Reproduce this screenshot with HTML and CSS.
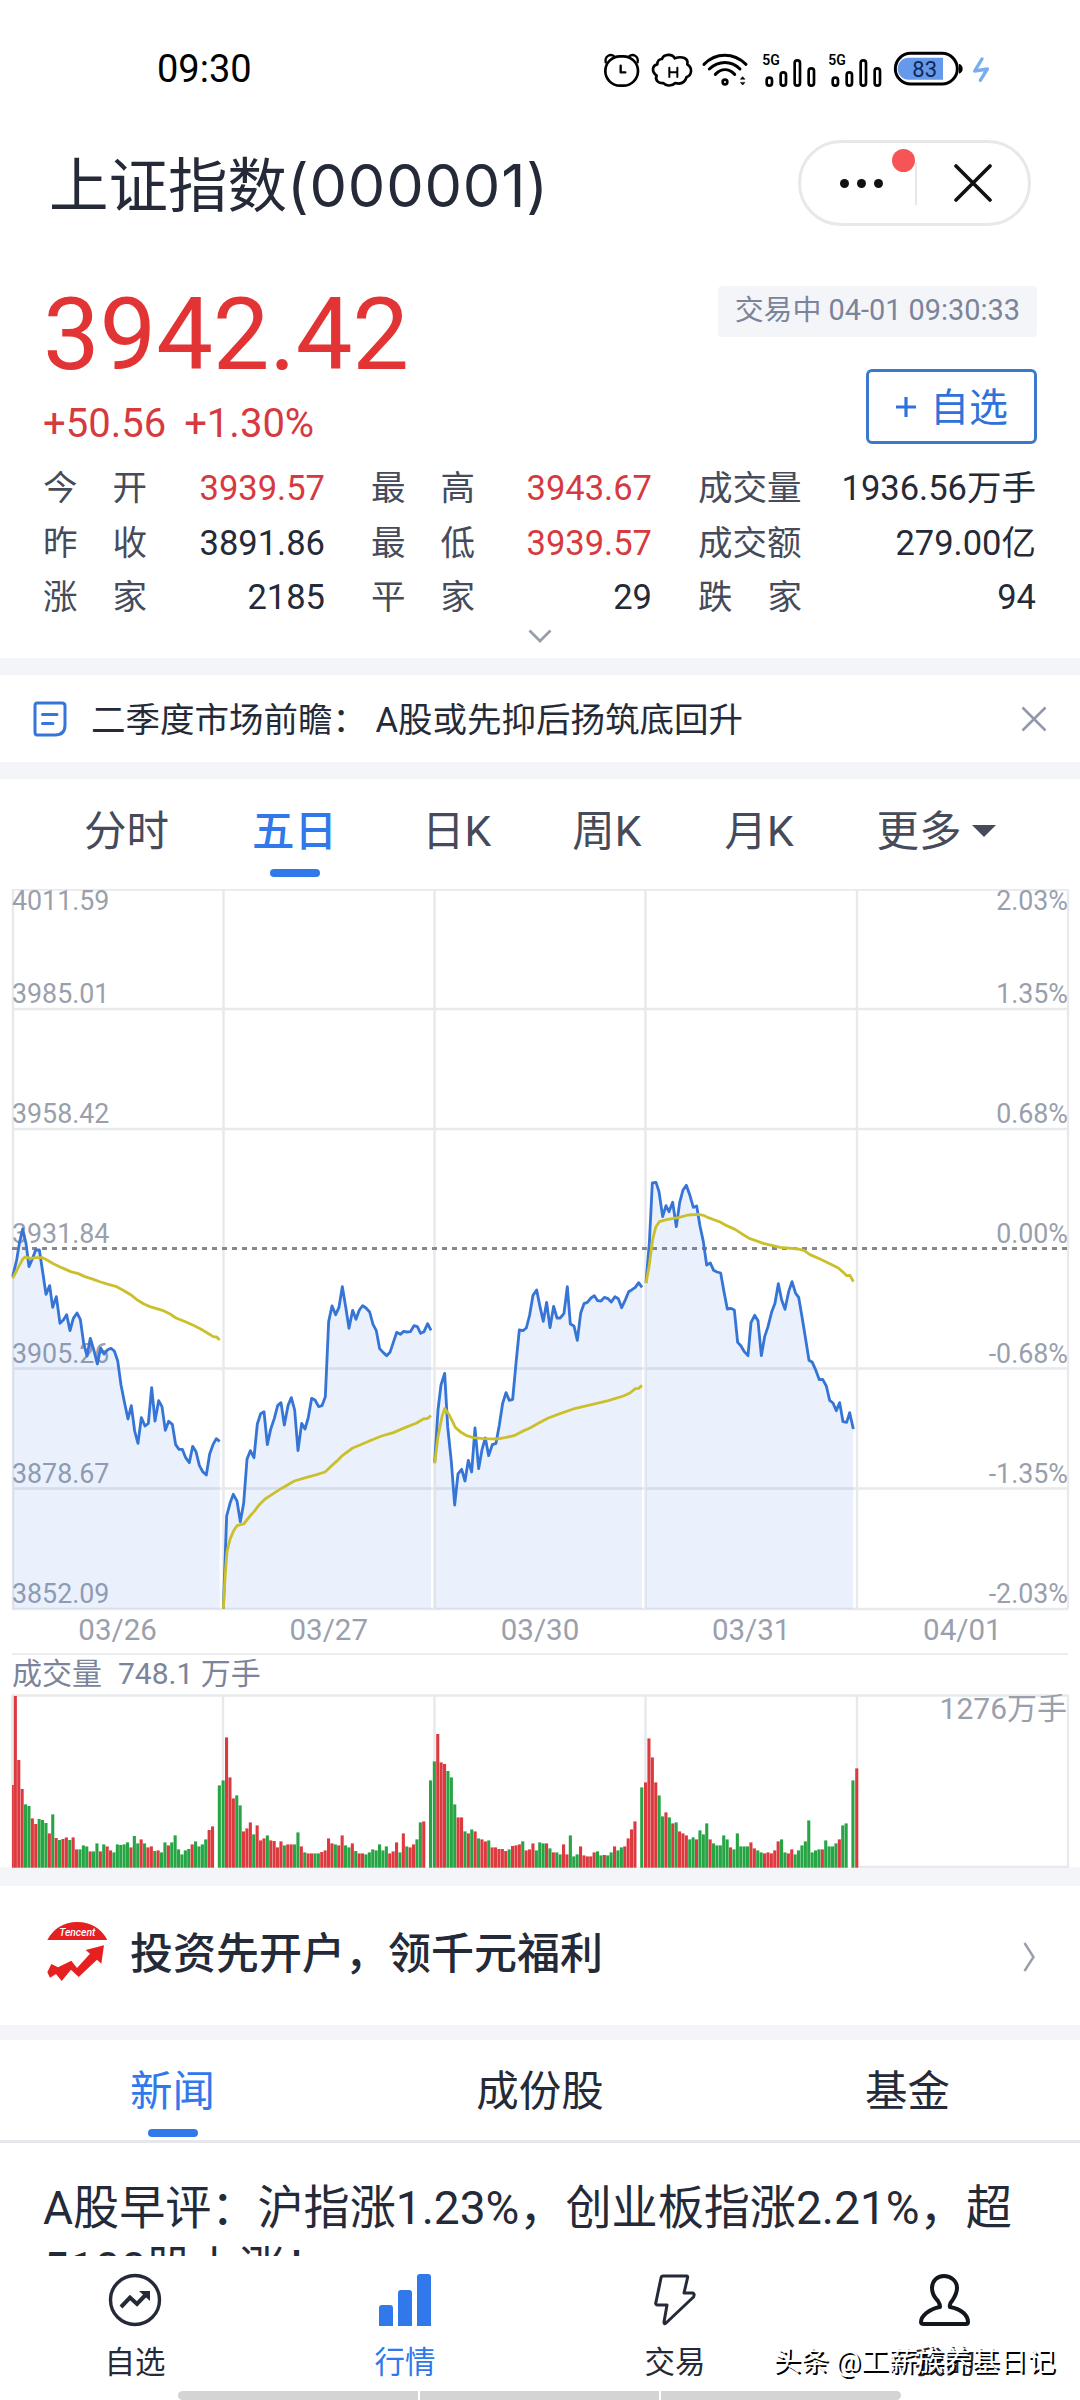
FILE: index.html
```html
<!DOCTYPE html>
<html lang="zh-CN">
<head>
    <meta charset="UTF-8">
    <title>上证指数(000001)</title>
    <link rel="stylesheet" href="styles.css">
</head>
<body>
<div id="app">
    <div class="status">
        <span class="time">09:30</span>
        <svg class="status-icons" width="396" height="40" viewBox="0 0 1188 120">
            <g fill="none" stroke="#000" stroke-width="8" stroke-linecap="round" stroke-linejoin="round">
                <rect x="16" y="22" width="98" height="88" rx="44"/>
                <path d="M17 40C14 22 30 12 44 23M113 40C116 22 100 12 86 23M62 50V70H76" stroke-width="7"/>
                <path d="M186 30C192 14 218 14 224 28C246 20 266 28 262 46C280 58 274 80 260 84C254 102 240 106 226 102C214 114 196 110 190 102C174 104 164 92 170 80C154 68 156 50 172 46C172 36 178 30 186 30Z"/>
                <path d="M208 56V84M232 56V84M208 70H232" stroke-width="6"/>
                <path d="M312 46C348 10 400 10 438 46M328 60C356 34 394 34 420 60M346 76C364 58 386 58 404 76" stroke-width="9"/>
                <circle cx="375" cy="99" r="7"/>
                <path d="M422 90L428 83L434 90ZM422 101L428 108L434 101Z" fill="#000" stroke-width="2"/>
                <g id="signal">
                    <rect x="500" y="86" width="16" height="24" rx="8"/>
                    <rect x="542" y="70" width="16" height="40" rx="8"/>
                    <rect x="584" y="34" width="16" height="76" rx="8"/>
                    <rect x="626" y="58" width="16" height="52" rx="8"/>
                </g>
                <use href="#signal" x="198"/>
            </g>
            <text x="487" y="47" class="net">5G</text>
            <text x="685" y="47" class="net">5G</text>
            <path d="M926 26H1029V92H926A33 33 0 0 1 926 26Z" fill="#6699ea"/>
            <rect x="886" y="13" width="186" height="92" rx="46" fill="none" stroke="#000" stroke-width="9"/>
            <path d="M1077 44Q1088 48 1088 59Q1088 70 1077 74Z"/>
            <text x="974" y="84" class="bat">83</text>
            <path d="M1146 30L1124 66L1162 60L1141 94" fill="none" stroke="#78adf2" stroke-width="10" stroke-linecap="round" stroke-linejoin="round"/>
        </svg>
    </div>

    <div class="header">
        <h1>上证指数<span>(000001)</span></h1>
        <div class="capsule">
            <div class="more"><i></i><i></i><i></i><b></b></div>
            <div class="close">
                <svg width="38" height="38" viewBox="0 0 38 38"><path d="M2 2L36 36M36 2L2 36" stroke="#111" stroke-width="3.6" stroke-linecap="round"/></svg>
            </div>
        </div>
    </div>

    <div class="quote">
        <div class="quote-top">
            <div class="left">
                <p class="now">3942.42</p>
                <p class="change"><span>+50.56</span><span>+1.30%</span></p>
            </div>
            <div class="right">
                <p class="state">交易中 04-01 09:30:33</p>
                <button class="add"><svg width="20" height="22" viewBox="0 0 20 22"><path d="M10 1V21M0 11H20" stroke="#2f72d9" stroke-width="3.2"/></svg><span>自选</span></button>
            </div>
        </div>
        <ul class="stats">
            <li><p><i>今</i><i>开</i></p><span class="red">3939.57</span></li>
            <li><p><i>最</i><i>高</i></p><span class="red">3943.67</span></li>
            <li><p>成交量</p><span>1936.56万手</span></li>
            <li><p><i>昨</i><i>收</i></p><span>3891.86</span></li>
            <li><p><i>最</i><i>低</i></p><span class="red">3939.57</span></li>
            <li><p>成交额</p><span>279.00亿</span></li>
            <li><p><i>涨</i><i>家</i></p><span>2185</span></li>
            <li><p><i>平</i><i>家</i></p><span>29</span></li>
            <li><p><i>跌</i><i>家</i></p><span>94</span></li>
        </ul>
        <svg class="fold" width="24" height="14" viewBox="0 0 24 14"><path d="M1.5 1.5L12 12L22.5 1.5" fill="none" stroke="#989eac" stroke-width="2.8"/></svg>
    </div>

    <div class="notice">
        <svg width="34" height="36" viewBox="0 0 34 36"><path d="M4 2H29Q32 2 32 5V24Q32 34 22 34H4Q2 34 2 31V5Q2 2 4 2ZM9.500 13.500H24M9.500 22.500H20" fill="none" stroke="#3576d8" stroke-width="3" stroke-linecap="round"/></svg>
        <p>二季度市场前瞻： A股或先抑后扬筑底回升</p>
        <svg width="26" height="26" viewBox="0 0 26 26"><path d="M1.500 1.500L24.500 24.500M24.500 1.500L1.500 24.500" stroke="#9298ab" stroke-width="2.5"/></svg>
    </div>

    <div class="chart">
        <ul class="periods">
            <li>分时</li>
            <li class="on">五日</li>
            <li>日K</li>
            <li>周K</li>
            <li>月K</li>
            <li>更多<i></i></li>
        </ul>
        <svg id="price" width="1080" height="724" viewBox="0 889 1080 724">
            <g class="grid">
                <path d="M12 889.500H1068M12 1009H1068M12 1129H1068M12 1368.500H1068M12 1488.500H1068M12 1609H1068"/>
                <path d="M13 889V1609M223.500 889V1609M434.500 889V1609M645.500 889V1609M857 889V1609M1068 889V1609" />
            </g>
            <path class="zero" d="M12 1248.500H1068"/>
            <g class="axis">
                <text x="12" y="909.500">4011.59</text>
                <text x="12" y="1002.500">3985.01</text>
                <text x="12" y="1122.500">3958.42</text>
                <text x="12" y="1242.500">3931.84</text>
                <text x="12" y="1362.500">3905.26</text>
                <text x="12" y="1482.500">3878.67</text>
                <text x="12" y="1602.500">3852.09</text>
            </g>
            <g class="axis end">
                <text x="1068" y="909.500">2.03%</text>
                <text x="1068" y="1002.500">1.35%</text>
                <text x="1068" y="1122.500">0.68%</text>
                <text x="1068" y="1242.500">0.00%</text>
                <text x="1068" y="1362.500">-0.68%</text>
                <text x="1068" y="1482.500">-1.35%</text>
                <text x="1068" y="1602.500">-2.03%</text>
            </g>
            <g id="lines" transform="translate(0 1100) scale(.33333)"></g>
        </svg>
        <ul class="dates">
            <li>03/26</li>
            <li>03/27</li>
            <li>03/30</li>
            <li>03/31</li>
            <li>04/01</li>
        </ul>
        <p class="vol-title">成交量<span>748.1 万手</span></p>
        <svg id="volume" width="1080" height="174" viewBox="0 1694 1080 174">
            <g class="grid">
                <path d="M12 1695.500H1068M857 1867H1068"/>
                <path d="M12.500 1695V1867M223 1695V1867M434.500 1695V1867M645.500 1695V1867M857 1695V1867M1068 1695V1867"/>
            </g>
            <text class="max" x="1067" y="1719">1276万手</text>
            <g id="bars"></g>
        </svg>
    </div>

    <div class="promo">
        <svg width="62" height="62" viewBox="0 0 186 186">
            <path d="M4 57Q32 4 94 3Q156 4 184 57Z" fill="#e62020"/>
            <text x="94" y="44" class="brand">Tencent</text>
            <path d="M4 154L16 129L36 139L76 119L93 141L132 98L119 87L174 73L166 128L153 116L98 168L75 146L47 180L30 159L12 170Z" fill="#e62020"/>
        </svg>
        <p>投资先开户，领千元福利</p>
        <svg class="arrow" width="12" height="32" viewBox="0 0 12 32"><path d="M1.500 2L10.500 16L1.500 30" fill="none" stroke="#999ead" stroke-width="2.4"/></svg>
    </div>

    <div class="news">
        <ul class="news-tab">
            <li class="on">新闻</li>
            <li>成份股</li>
            <li>基金</li>
        </ul>
        <p class="headline">A股早评：沪指涨1.23%，创业板指涨2.21%，超<br>5100股上涨！</p>
    </div>

    <ul class="nav">
        <li>
            <svg width="54" height="54" viewBox="0 0 54 54"><circle cx="27" cy="27" r="24.500" fill="none" stroke="#252a38" stroke-width="3.400"/><path d="M13 34L22 24.500L29 31L38 21.500" fill="none" stroke="#252a38" stroke-width="4"/><path d="M31 18H42V28Z" fill="#252a38"/></svg>
            <p>自选</p>
        </li>
        <li class="on">
            <svg width="54" height="54" viewBox="0 0 54 54"><path d="M1 53V35Q1 32 4 32H12Q15 32 15 35V53ZM20 53V20Q20 17 23 17H31Q34 17 34 20V53ZM39 53V4Q39 1 42 1H50Q53 1 53 4V53Z" fill="#3178ea"/></svg>
            <p>行情</p>
        </li>
        <li>
            <svg width="54" height="54" viewBox="0 0 54 54"><path d="M15 3H39Q40 3 39.500 5L36 20H45Q47 21 45.500 24L18 50Q16 52 16 49L19 32H9Q7 31 8 29L13 5Q13.500 3 15 3Z" fill="none" stroke="#252a38" stroke-width="3" stroke-linejoin="round"/></svg>
            <p>交易</p>
        </li>
        <li>
            <svg width="54" height="54" viewBox="0 0 54 54"><path d="M22 34Q22 31 20 28C14 22 14 17 14 15C14 8 19 3 26 3C33 3 39 8 39 15C39 18 38 22 34 28Q31 31 32 34C43 36 50 42 50 49Q50 51 48 51H6Q3 51 3 49C3 43 11 36 22 34Z" fill="none" stroke="#12171d" stroke-width="4" stroke-linejoin="round"/></svg>
            <p>我的</p>
        </li>
    </ul>
    <div class="home-bar"><i></i><i></i><i></i></div>
    <p class="mark">头条 @工薪族养基日记</p>
</div>

<script>
// 每天的分时线，三倍坐标
var price = [
    "38,530 50,480 58,430 68,387 78,430 87,500 97,477 107,450 118,450 128,515 138,583 149,557 158,622 169,590 180,670 190,660 200,644 210,692 220,655 231,639 241,658 251,730 261,768 271,715 281,748 292,792 302,744 312,762 322,750 333,745 343,753 353,782 363,855 373,905 384,957 394,917 404,993 414,1030 424,953 435,978 445,970 455,863 465,963 476,902 486,920 496,991 506,964 517,973 527,1034 537,1048 547,1048 557,1073 568,1088 578,1039 588,1055 598,1096 608,1115 619,1125 629,1062 639,1034 649,1016 659,1024",
    "670,1526 680,1248 690,1210 700,1183 711,1203 721,1265 731,1210 741,1078 751,1052 762,1073 772,972 782,941 792,935 802,1034 812,988 823,955 833,917 843,908 853,975 864,917 874,893 884,930 894,1052 905,970 915,987 925,952 935,895 945,900 956,920 966,917 976,890 986,665 996,618 1007,644 1017,622 1027,560 1037,620 1047,685 1058,631 1068,658 1078,630 1088,617 1098,624 1109,636 1119,673 1129,692 1139,746 1150,758 1160,767 1170,757 1180,727 1190,697 1201,703 1211,694 1221,696 1231,695 1242,677 1252,680 1262,700 1272,695 1283,671 1293,691",
    "1304,1087 1314,930 1323,855 1334,820 1343,980 1354,1085 1364,1215 1374,1122 1385,1108 1395,1143 1405,1081 1415,1116 1425,984 1436,1106 1446,1049 1456,1014 1466,1067 1477,1034 1488,1030 1498,975 1508,910 1518,878 1528,901 1538,898 1548,790 1558,690 1569,692 1579,684 1589,645 1599,586 1610,570 1620,620 1630,664 1640,607 1650,683 1661,619 1671,654 1681,654 1692,640 1702,560 1711,672 1722,678 1732,721 1742,640 1752,611 1762,607 1773,594 1783,587 1793,602 1803,603 1813,592 1824,596 1834,606 1845,590 1855,596 1865,623 1875,602 1886,575 1896,569 1906,562 1916,548 1926,562",
    "1938,548 1948,430 1957,249 1968,247 1977,275 1988,350 1998,317 2007,335 2018,307 2029,380 2039,308 2049,270 2059,256 2069,284 2080,322 2090,318 2100,378 2110,425 2120,495 2131,489 2141,511 2151,516 2162,519 2172,575 2182,627 2192,625 2203,630 2213,727 2223,738 2233,755 2244,767 2253,668 2264,646 2274,662 2284,767 2294,710 2304,680 2315,636 2325,610 2335,551 2345,600 2355,628 2366,575 2376,545 2387,580 2396,592 2406,650 2417,718 2427,781 2437,787 2448,812 2458,839 2468,838 2479,858 2489,901 2499,909 2509,932 2519,908 2529,965 2540,967 2549,938 2560,987"
];
var avg = [
    "38,535 56,500 68,478 75,471 92,475 107,473 128,473 145,482 160,491 185,503 212,515 235,521 255,530 280,538 302,546 325,553 350,560 372,572 392,584 412,600 432,612 450,620 487,631 512,643 528,654 558,666 580,676 602,687 622,699 640,710 650,711 659,720",
    "670,1526 676,1420 681,1355 690,1318 701,1292 711,1277 731,1272 750,1248 762,1235 778,1214 795,1197 820,1181 843,1166 883,1143 920,1132 950,1124 975,1116 992,1100 1012,1082 1028,1066 1058,1044 1080,1035 1115,1020 1145,1008 1180,998 1215,983 1250,969 1270,957 1283,955 1293,947",
    "1304,1090 1314,1010 1326,950 1334,926 1348,945 1366,982 1383,997 1398,1006 1420,1013 1450,1016 1490,1017 1515,1013 1542,1007 1565,995 1590,984 1615,970 1645,954 1680,941 1720,927 1765,916 1825,902 1870,888 1890,879 1906,866 1916,865 1926,856",
    "1938,550 1948,494 1958,418 1967,382 1978,365 2000,359 2035,353 2065,345 2095,343 2110,346 2125,353 2160,366 2180,377 2205,388 2225,401 2250,416 2290,430 2340,442 2395,447 2413,452 2430,464 2460,477 2485,489 2515,504 2530,517 2540,527 2550,526 2560,545"
];
var html = "";
for(var i = 0; i < price.length; i++){
    var pts = price[i].split(" ");
    var x1 = pts[0].split(",")[0];
    var x2 = pts[pts.length-1].split(",")[0];
    html += `<polygon class="area" points="${x1},1526 ${price[i]} ${x2},1526"/>
        <polyline class="now-line" points="${price[i]}"/>
        <polyline class="avg-line" points="${avg[i]}"/>`;
}
document.getElementById("lines").innerHTML = html;

// 成交量，r 涨 g 跌
var volume = [
    "248r 515r 323r 236r 190g 185g 148r 131r 146g 143g 134g 103r 160g 89r 83g 86r 91r 83g 91r 55r 55g 67g 64g 49r 49g 73g 49r 70g 64r 52r 46g 70g 68g 70g 76g 61r 95g 73g 85r 73g 61r 64r 50g 52r 46g 76g 67r 76g 97g 55g 40g 52g 56g 70r 79g 64g 70g 85g 113r 124r 0r 247g",
    "262g 391r 271r 208r 217g 187g 109r 118r 136r 100g 127r 82r 88r 97g 82r 80r 61r 79r 67g 70r 70r 70g 106g 64r 46g 43r 43r 43g 43g 47r 52r 88r 73r 70g 67r 97r 67g 61g 73r 50g 43r 43r 40g 46g 55g 52g 70g 52g 64g 43r 49r 76r 46g 103r 64g 61r 70r 85g 136g 139r 0r 262g",
    "319g 401r 316r 311r 290g 271g 190g 151r 151r 109g 103r 115g 109r 88g 85r 79r 82g 61r 61r 56r 56r 50r 55g 65r 67r 70r 79g 52r 55r 73r 52g 76g 73g 73r 58g 46r 46g 40g 70r 40r 97g 34g 40g 64r 37r 34r 34r 46r 49g 37g 38r 37g 46g 64r 52g 61g 64r 88r 115r 139r 0r 241g",
    "256r 388r 331r 256r 217g 154g 166r 151g 133r 136g 109r 103r 97r 85g 91g 85r 112g 100g 133g 85r 73g 67g 67g 97g 85g 61r 55g 103g 64g 64g 64g 76r 58r 52g 46g 43r 46r 43r 52r 79r 85g 46g 43r 55r 40g 52g 67g 79g 142g 46g 52g 55g 55r 82g 64g 64g 73g 85r 127g 133g 0r 262g",
    "298r"
];
var bars = "";
volume.forEach(function(day,d){
    day.split(" ").forEach(function(v,i){
        var h = parseInt(v)/3;
        var x = 10.4 + 211.2*d + 3.4*i;
        var w = 3.1;
        // 第一根贴着左边线
        if(d == 0 && i == 0){
            x = 12;
            w = 1.8;
        }
        bars += `<rect class="${v.slice(-1)}" x="${x.toFixed(1)}" y="${(1867.7-h).toFixed(1)}" width="${w}" height="${h.toFixed(1)}"/>`;
    });
});
document.getElementById("bars").innerHTML = bars;
</script>
</body>
</html>
```
FILE: styles.css
```css
html,body,ul,p,h1{
    margin: 0;
    padding: 0;
}
body{
    background-color: #ffffff;
    color: #252a38;
    font-family: Roboto, "Noto Sans CJK SC", sans-serif;
}
li{
    list-style: none;
}
i{
    font-style: normal;
}
svg{
    display: block;
    flex: none;
}
#app{
    width: 1080px;
    height: 2400px;
    position: relative;
    overflow: hidden;
}
.status{
    height: 138px;
    display: flex;
    justify-content: space-between;
    box-sizing: border-box;
    padding: 49px 84px 0 157px;
}
.time{
    font-size: 38px;
    line-height: 40px;
    color: #000000;
}
.net{
    font: 600 42px Roboto, sans-serif;
}
.bat{
    font: 66px Roboto, sans-serif;
    fill: #10275a;
    text-anchor: middle;
}
.header{
    height: 122px;
    display: flex;
    justify-content: space-between;
    align-items: flex-start;
    padding: 0 49px;
}
h1{
    font-size: 59.5px;
    line-height: 94px;
    font-weight: 400;
}
h1 span{
    font-family: Inter, sans-serif;
    letter-spacing: .8px;
}
.capsule{
    width: 233px;
    height: 86px;
    box-sizing: border-box;
    border: 3px solid #e8e8e8;
    border-radius: 43px;
    display: flex;
    align-items: center;
    margin-top: 2px;
}
.more{
    width: 116px;
    height: 43px;
    position: relative;
    display: flex;
    gap: 8px;
    justify-content: flex-end;
    align-items: center;
    box-sizing: border-box;
    padding-right: 32px;
    border-right: 2px solid #e8e8e8;
}
.more i{
    width: 9px;
    height: 9px;
    border-radius: 50%;
    background-color: #111111;
}
.more b{
    width: 23px;
    height: 23px;
    border-radius: 50%;
    background-color: #f75555;
    position: absolute;
    right: 0;
    top: -13px;
}
.close{
    padding-left: 37px;
}
.quote{
    height: 398px;
    border-bottom: 17px solid #f3f5f9;
    padding: 0 43px;
}
.quote-top{
    height: 201px;
    display: flex;
    justify-content: space-between;
}
.now{
    font-size: 101px;
    line-height: 110px;
    color: #e23434;
    padding-top: 20px;
    letter-spacing: -.2px;
}
.change{
    font-size: 40px;
    line-height: 46px;
    padding-top: 11px;
    color: #d63a40;
}
.change span{
    margin-right: 18px;
}
.right{
    display: flex;
    flex-direction: column;
    align-items: flex-end;
    padding-top: 26px;
}
.state{
    height: 51px;
    padding: 0 17px;
    line-height: 49px;
    font-size: 28.9px;
    color: #7b8499;
    background-color: #f3f5f9;
    border-radius: 4px;
}
.add{
    width: 171px;
    height: 75px;
    margin-top: 32px;
    padding: 0 0 0 1px;
    border: 3px solid #3c78cc;
    border-radius: 6px;
    background-color: #ffffff;
    color: #2f72d9;
    font: 39px Roboto, "Noto Sans CJK SC", sans-serif;
    display: flex;
    justify-content: center;
    align-items: center;
    gap: 14px;
}
.add span{
    padding-bottom: 6px;
}
.stats{
    display: grid;
    grid-template-columns: 282px 281px 338px;
    column-gap: 46px;
    font-size: 34.5px;
    line-height: 54.5px;
}
.stats li{
    display: flex;
    justify-content: space-between;
}
.stats p{
    width: 104px;
    display: flex;
    justify-content: space-between;
    color: #454b5a;
}
.stats .red{
    color: #d63a40;
}
.fold{
    margin: 4px auto 0;
}
.notice{
    height: 87px;
    border-bottom: 17px solid #f3f5f9;
    display: flex;
    align-items: center;
    padding: 0 33px;
}
.notice p{
    flex: 1;
    padding: 0 0 4px 24px;
    font-size: 34.5px;
    white-space: pre;
}
.chart{
    height: 1088px;
    border-bottom: 19px solid #f3f5f9;
}
.periods{
    height: 110px;
    display: flex;
    padding-left: 84px;
    box-sizing: border-box;
    font-size: 42.5px;
    line-height: 105px;
    color: #454b5a;
}
.periods li{
    margin-right: 83px;
}
.periods li:nth-child(2){
    margin-right: 85px;
}
.periods li:nth-child(3){
    margin-right: 81px;
}
.periods i{
    display: inline-block;
    border: 12px solid transparent;
    border-top: 12px solid #454b5a;
    border-bottom: 0;
    margin-left: 10px;
    vertical-align: 9px;
}
.on{
    position: relative;
    color: #3178ea;
}
.periods .on{
    font-weight: 500;
}
.periods .on:after,.news-tab .on:after{
    content: "";
    width: 50px;
    height: 8px;
    border-radius: 4px;
    background-color: #3178ea;
    position: absolute;
    left: 50%;
    margin-left: -25px;
    top: 90px;
}
.grid path{
    fill: none;
    stroke: #e8e9ec;
    stroke-width: 2.4;
}
.zero{
    stroke: #85878f;
    stroke-width: 2.8;
    stroke-dasharray: 5 5;
}
.axis text{
    font-size: 26.8px;
    fill: #9a9fad;
}
.end{
    text-anchor: end;
}
.area{
    fill: #3178ea;
    fill-opacity: .1;
}
.now-line,.avg-line{
    fill: none;
    stroke: #3675d6;
    stroke-width: 8.5;
    stroke-linejoin: round;
}
.avg-line{
    stroke: #cbc02c;
}
.dates{
    display: flex;
    width: 1056px;
    height: 40px;
    margin: 0 12px;
    border-bottom: 2px solid #ededf0;
}
.dates li{
    width: 20%;
    text-align: center;
    font-size: 29.5px;
    line-height: 35px;
    color: #9a9fad;
}
.vol-title{
    height: 39px;
    padding-left: 12px;
    font-size: 30px;
    line-height: 37px;
    color: #7b8499;
}
.vol-title span{
    margin-left: 16px;
}
.max{
    font-size: 30px;
    fill: #9a9fad;
    text-anchor: end;
}
.r{
    fill: #dd3a40;
}
.g{
    fill: #27a545;
}
.promo{
    height: 139px;
    border-bottom: 15px solid #f3f5f9;
    display: flex;
    align-items: flex-start;
    padding: 0 45px 0 46px;
}
.promo svg{
    margin-top: 35px;
}
.promo .arrow{
    margin-top: 55px;
}
.promo p{
    flex: 1;
    padding-left: 22px;
    font-size: 43px;
    line-height: 137px;
    font-weight: 500;
}
.brand{
    font: italic 500 31px Roboto, sans-serif;
    fill: #ffffff;
    text-anchor: middle;
}
.news-tab{
    height: 100px;
    border-bottom: 3px solid #e6e7ea;
    display: flex;
    justify-content: space-between;
    padding: 0 130px;
    font-size: 42.5px;
    line-height: 103px;
}
.news-tab .on:after{
    top: 89px;
}
.headline{
    padding: 35px 43px 0;
    font-size: 46.1px;
    line-height: 61px;
    white-space: nowrap;
}
.nav{
    width: 1080px;
    height: 144px;
    position: absolute;
    left: 0;
    bottom: 0;
    display: flex;
    background-color: #ffffff;
}
.nav li{
    width: 25%;
    display: flex;
    flex-direction: column;
    align-items: center;
    padding-top: 17px;
    font-size: 30.5px;
    line-height: 36px;
}
.nav p{
    padding-top: 18px;
}
.home-bar{
    position: absolute;
    left: 178px;
    bottom: 0;
    width: 723px;
    height: 9px;
    display: flex;
    gap: 2px;
    border-radius: 5px;
    overflow: hidden;
}
.home-bar i{
    flex: 1;
    background-color: #d4d4d4;
}
.mark{
    position: absolute;
    right: 25px;
    top: 2342px;
    font-size: 27.8px;
    line-height: 40px;
    color: #ffffff;
    text-shadow: 2px 2px 0 #000000;
}
```
